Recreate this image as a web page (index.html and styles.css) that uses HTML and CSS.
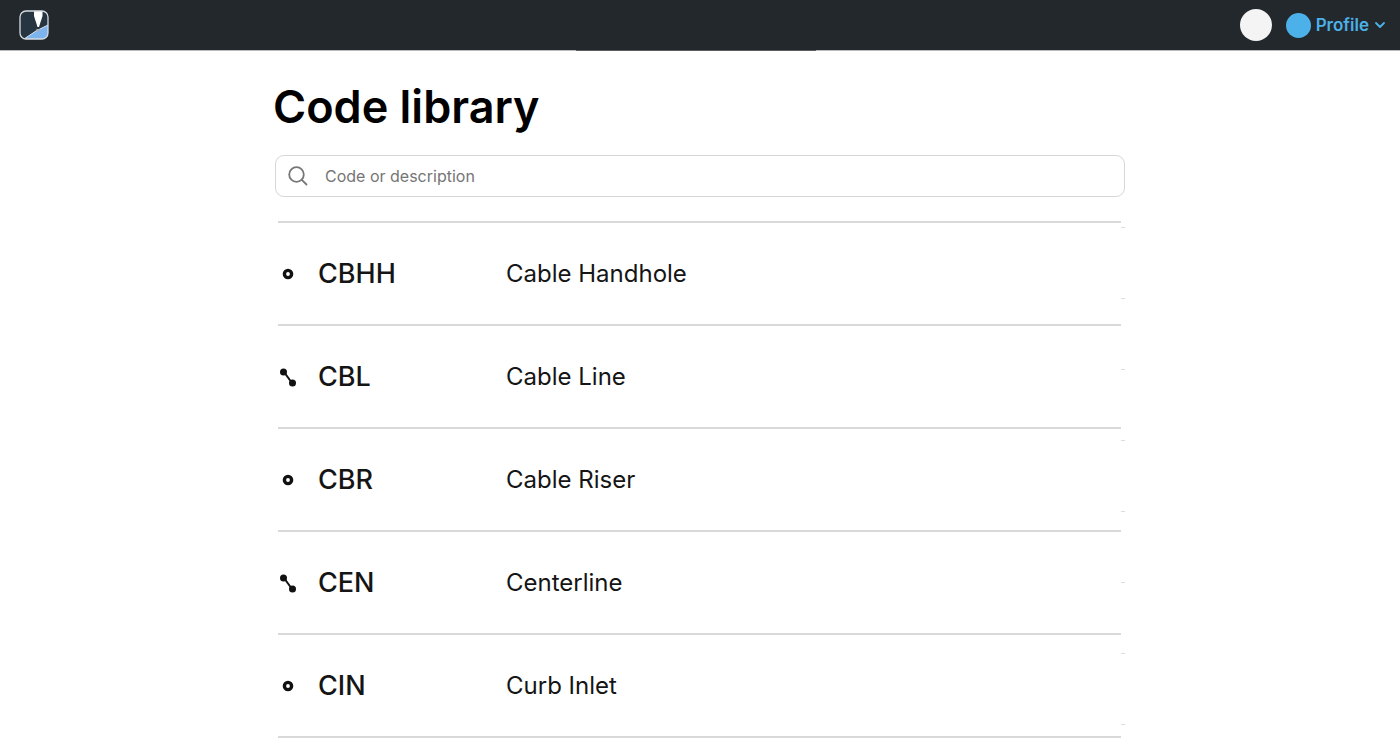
FILE: index.html
```html
<!DOCTYPE html>
<html lang="en">
<head>
  <meta charset="UTF-8">
  <title>Code library</title>
  <meta name="viewport" content="width=device-width, initial-scale=1">
  <link rel="stylesheet" href="styles.css">
</head>
<body>
  <header class="topbar">
    <a class="logo" href="#" aria-label="Home">
      <svg width="30" height="30" viewBox="0 0 30 30">
        <defs>
          <clipPath id="logo-clip"><rect x="1" y="1" width="28" height="28" rx="6"/></clipPath>
        </defs>
        <g clip-path="url(#logo-clip)">
          <rect width="30" height="30" fill="#263540"/>
          <path d="M5 29L17 21L29 15V29Z" fill="#7db4ee"/>
          <path d="M5 29L17 21L29 15" fill="none" stroke="#d5e6f6" stroke-width="1"/>
          <path d="M15 1H23.500V6L20 17H18.500L15 6Z" fill="#fff"/>
          <path d="M17.500 19h3l.5 1.500-2 1.500-2-1.500z" fill="#a4adb3"/>
        </g>
        <rect x="1" y="1" width="28" height="28" rx="6" fill="none" stroke="#d3dbe1" stroke-width="1.300"/>
      </svg>
    </a>
    <nav class="account">
      <span class="avatar"></span>
      <button class="profile-btn" type="button">
        <span class="profile-dot"></span>
        Profile
        <svg class="chevron" width="12" height="8" viewBox="0 0 12 8">
          <path d="M2 2L6 6L10 2" fill="none" stroke="currentColor" stroke-width="1.800" stroke-linecap="round" stroke-linejoin="round"/>
        </svg>
      </button>
    </nav>
  </header>

  <main class="page">
    <h1>Code library</h1>

    <label class="search">
      <svg width="20" height="20" viewBox="0 0 20 20">
        <circle cx="8.500" cy="8.500" r="7.300" fill="none" stroke="#777" stroke-width="1.800"/>
        <path d="M13.800 13.800L18.500 18.500" stroke="#777" stroke-width="1.800" stroke-linecap="round"/>
      </svg>
      <input type="search" placeholder="Code or description" aria-label="Code or description">
    </label>

    <!-- Shared row icons -->
    <svg class="symbols" width="0" height="0">
      <symbol id="point" viewBox="0 0 20 20">
        <circle cx="10" cy="10" r="3.600" fill="none" stroke="#111" stroke-width="3.400"/>
      </symbol>
      <symbol id="line" viewBox="0 0 20 20">
        <path d="M6 5L14 16" stroke="#111" stroke-width="2"/>
        <circle cx="5.500" cy="5" r="3.500" fill="#111"/>
        <circle cx="14.500" cy="16" r="3.500" fill="#111"/>
      </symbol>
    </svg>

    <div class="code-list">
      <table class="code-table" aria-label="Codes">
        <tbody>
          <tr>
            <td class="type"><svg class="icon"><use href="#point"/></svg></td>
            <th class="code" scope="row">CBHH</th>
            <td>Cable Handhole</td>
          </tr>
          <tr>
            <td class="type"><svg class="icon"><use href="#line"/></svg></td>
            <th class="code" scope="row">CBL</th>
            <td>Cable Line</td>
          </tr>
          <tr>
            <td class="type"><svg class="icon"><use href="#point"/></svg></td>
            <th class="code" scope="row">CBR</th>
            <td>Cable Riser</td>
          </tr>
          <tr>
            <td class="type"><svg class="icon"><use href="#line"/></svg></td>
            <th class="code" scope="row">CEN</th>
            <td>Centerline</td>
          </tr>
          <tr>
            <td class="type"><svg class="icon"><use href="#point"/></svg></td>
            <th class="code" scope="row">CIN</th>
            <td>Curb Inlet</td>
          </tr>
        </tbody>
      </table>
    </div>
  </main>
</body>
</html>
```
FILE: styles.css
```css
* {
  box-sizing: border-box;
}
body {
  margin: 0;
  background: #fff;
  color: #151515;
  font-family: Inter, "Liberation Sans", sans-serif;
}
svg {
  display: block;
}
.topbar {
  position: relative;
  display: flex;
  align-items: center;
  justify-content: space-between;
  height: 51px;
  padding: 0 14px 0 19px;
  background: #23282c;
  border-bottom: 1px solid #b9bbbc;
}
.topbar::after {
  content: "";
  position: absolute;
  top: 100%;
  left: 50%;
  width: 240px;
  height: 1px;
  margin-left: -124px;
  background: #5c5c5e;
}
.account {
  display: flex;
  align-items: center;
  gap: 14px;
}
.avatar {
  width: 32px;
  height: 32px;
  border-radius: 50%;
  background: #f4f4f5;
}
.profile-btn {
  display: flex;
  align-items: center;
  gap: 5px;
  padding: 0;
  border: none;
  background: none;
  color: #4bb1e8;
  font-family: inherit;
  font-size: 17px;
  font-weight: 600;
  cursor: pointer;
}
.profile-dot {
  width: 25px;
  height: 25px;
  border-radius: 50%;
  background: #4bb1e8;
}
.page {
  max-width: 882px;
  margin: 0 auto;
  padding: 28px 16px 0;
}
h1 {
  margin: 0 0 20px -2px;
  color: #000;
  font-size: 45px;
  font-weight: 600;
  line-height: 56px;
}
.search {
  display: flex;
  align-items: center;
  gap: 17px;
  height: 42px;
  padding: 0 12px;
  border: 1px solid #d8d8d8;
  border-radius: 9px;
}
.search input {
  flex: 1;
  min-width: 0;
  padding: 0;
  border: none;
  outline: none;
  background: none;
  color: #151515;
  font-family: inherit;
  font-size: 16px;
}
.search input::placeholder {
  color: #757575;
  opacity: 1;
}
.symbols {
  position: absolute;
}
/* Short tick marks run down the right edge */
.code-list {
  margin-top: 24px;
  padding: 0 4px 0 3px;
  background: repeating-linear-gradient(transparent 0 6px, #ddd 6px 7px, transparent 7px 71px) right top / 4px 100% no-repeat;
}
.code-table {
  width: 100%;
  border-collapse: collapse;
  table-layout: fixed;
  border-top: 2px solid #d9d9d9;
}
.code-table td,
.code-table th {
  height: 103px;
  padding: 0;
  border-bottom: 2px solid #d9d9d9;
  text-align: left;
  font-size: 24px;
}
.code-table .type {
  width: 40px;
}
.code-table .code {
  width: 188px;
  font-size: 27px;
  font-weight: 500;
}
.icon {
  width: 20px;
  height: 20px;
}
```
